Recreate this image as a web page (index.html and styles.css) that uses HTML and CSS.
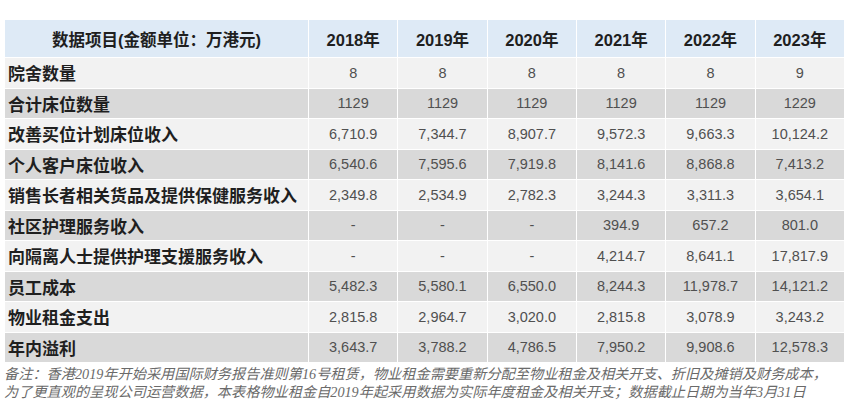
FILE: index.html
```html
<!DOCTYPE html>
<html lang="zh-CN">
<head>
<meta charset="utf-8">
<title>数据表</title>
<link rel="stylesheet" href="styles.css">
</head>
<body>
<div class="wrap">
<table class="data">
<colgroup>
<col class="c-label">
<col class="c-year"><col class="c-year"><col class="c-year"><col class="c-year"><col class="c-year"><col class="c-year">
</colgroup>
<thead>
<tr>
<th class="h-label">数据项目(金额单位：万港元)</th>
<th>2018年</th><th>2019年</th><th>2020年</th><th>2021年</th><th>2022年</th><th>2023年</th>
</tr>
</thead>
<tbody>
<tr><td class="lbl">院舍数量</td><td>8</td><td>8</td><td>8</td><td>8</td><td>8</td><td>9</td></tr>
<tr><td class="lbl">合计床位数量</td><td>1129</td><td>1129</td><td>1129</td><td>1129</td><td>1129</td><td>1229</td></tr>
<tr><td class="lbl">改善买位计划床位收入</td><td>6,710.9</td><td>7,344.7</td><td>8,907.7</td><td>9,572.3</td><td>9,663.3</td><td>10,124.2</td></tr>
<tr><td class="lbl">个人客户床位收入</td><td>6,540.6</td><td>7,595.6</td><td>7,919.8</td><td>8,141.6</td><td>8,868.8</td><td>7,413.2</td></tr>
<tr><td class="lbl">销售长者相关货品及提供保健服务收入</td><td>2,349.8</td><td>2,534.9</td><td>2,782.3</td><td>3,244.3</td><td>3,311.3</td><td>3,654.1</td></tr>
<tr><td class="lbl">社区护理服务收入</td><td>-</td><td>-</td><td>-</td><td>394.9</td><td>657.2</td><td>801.0</td></tr>
<tr><td class="lbl">向隔离人士提供护理支援服务收入</td><td>-</td><td>-</td><td>-</td><td>4,214.7</td><td>8,641.1</td><td>17,817.9</td></tr>
<tr><td class="lbl">员工成本</td><td>5,482.3</td><td>5,580.1</td><td>6,550.0</td><td>8,244.3</td><td>11,978.7</td><td>14,121.2</td></tr>
<tr><td class="lbl">物业租金支出</td><td>2,815.8</td><td>2,964.7</td><td>3,020.0</td><td>2,815.8</td><td>3,078.9</td><td>3,243.2</td></tr>
<tr><td class="lbl">年内溢利</td><td>3,643.7</td><td>3,788.2</td><td>4,786.5</td><td>7,950.2</td><td>9,908.6</td><td>12,578.3</td></tr>
</tbody>
</table>
<p class="note">备注：香港2019年开始采用国际财务报告准则第16号租赁，物业租金需要重新分配至物业租金及相关开支、折旧及摊销及财务成本，<br>为了更直观的呈现公司运营数据，本表格物业租金自2019年起采用数据为实际年度租金及相关开支；数据截止日期为当年3月31日</p>
</div>
</body>
</html>
```

FILE: styles.css
```css
html, body {
  margin: 0;
  padding: 0;
  background: #ffffff;
}

.wrap {
  padding: 19px 12px 0 4px;
}

.data {
  width: 840px;
  table-layout: fixed;
  border-collapse: collapse;
  font-family: "Liberation Sans", "Noto Sans CJK SC", sans-serif;
}

.c-label { width: 304px; }
.c-year { width: 89.33px; }

.data th,
.data td {
  border: 1px solid #ffffff;
  padding: 0;
  text-align: center;
  white-space: nowrap;
}

.data thead th {
  height: 37px;
  background: #deeaf6;
  color: #1f1f1f;
  font-size: 16.5px;
  font-weight: bold;
  font-family: "Liberation Sans", "Noto Sans CJK SC", sans-serif;
}

.data tbody td {
  height: 29.5px;
  font-size: 14.5px;
  color: #505050;
}

.data tbody tr:nth-child(odd) td { background: #f2f2f2; }
.data tbody tr:nth-child(even) td { background: #d9d9d9; }

.data td.lbl {
  text-align: left;
  padding-left: 3px;
  font-size: 17px;
  font-weight: bold;
  color: #1f1f1f;
  font-family: "Noto Sans CJK SC", sans-serif;
}

.note {
  margin: 2px 0 0 0;
  white-space: nowrap;
  font-family: "Liberation Serif", "Noto Sans CJK SC", serif;
  font-style: italic;
  font-size: 14.2px;
  line-height: 18px;
  color: #6a6a6a;
}
```
